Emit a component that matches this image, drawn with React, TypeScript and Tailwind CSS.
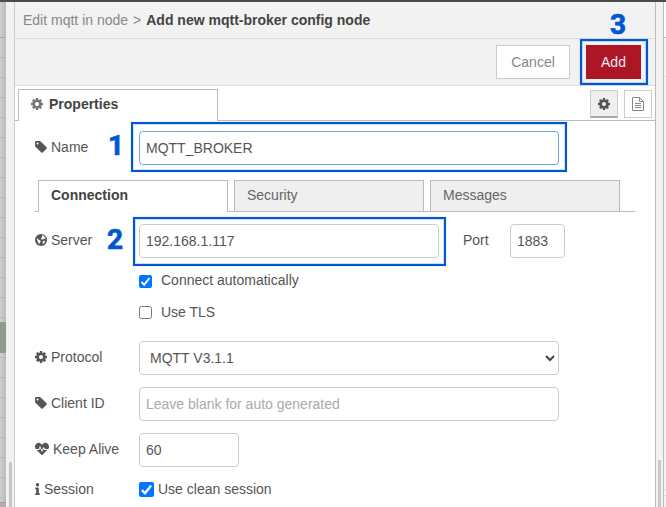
import React from 'react';
import { FaHeartbeat, FaInfo } from 'react-icons/fa';

function Gear({ className = '' }: { className?: string }) {
  return (
    <svg viewBox="0 128 1536 1536" className={'h-3 w-3 shrink-0 fill-current ' + className}>
      <path d="M1024 896q0-106-75-181t-181-75-181 75-75 181 75 181 181 75 181-75 75-181zm512-109v222q0 12-8 23t-20 13l-185 28q-19 54-39 91 35 50 107 138 10 12 10 25t-9 23q-27 37-99 108t-94 71q-12 0-26-9l-138-108q-44 23-91 38-16 136-29 186-7 28-36 28h-222q-14 0-24.500-8.500t-11.500-21.500l-28-184q-49-16-90-37l-141 107q-10 9-25 9-14 0-25-11-126-114-165-168-7-10-7-23 0-12 8-23 15-21 51-66.500t54-70.500q-27-50-41-99l-183-27q-13-2-21-12.500t-8-23.500v-222q0-12 8-23t19-13l186-28q14-46 39-92-40-57-107-138-10-12-10-24 0-10 9-23 26-36 98.500-107.500t94.500-71.500q13 0 26 10l138 107q44-23 91-38 16-136 29-186 7-28 36-28h222q14 0 24.500 8.500t11.500 21.500l28 184q49 16 90 37l142-107q9-9 24-9 13 0 25 10 129 119 165 170 7 8 7 22 0 12-8 23-15 21-51 66.500t-54 70.500q26 50 41 98l183 28q13 2 21 12.500t8 23.500z" />
    </svg>
  );
}

function Tag() {
  return (
    <svg viewBox="0 128 1536 1536" className="h-3 w-3 shrink-0 fill-current">
      <path d="M448 448q0-53-37.500-90.500t-90.500-37.500-90.500 37.500-37.500 90.500 37.500 90.500 90.500 37.500 90.500-37.500 37.500-90.500zm1067 576q0 53-37 90l-491 492q-39 37-91 37-53 0-90-37l-715-716q-38-37-64.500-101t-26.500-117v-416q0-52 38-90t90-38h416q53 0 117 26.500t102 64.500l715 714q37 39 37 91z" />
    </svg>
  );
}

function Globe() {
  return (
    <svg viewBox="0 0 12 12" className="h-3 w-3 shrink-0">
      <circle cx="6" cy="6" r="6" className="fill-current" />
      <path className="fill-white" d="M7.200 1.300l1.500.500 1.700 2.100-.100 1-1.200-.400-1 .900-1.400.200-.800-1 .900-1.200zM1.700 5.200l.800-.700 1.200 1.300 1.300.500.800 1-.900 1.100-.500 1.600-.700-.300-.600-1.700zM8 7l1.600-.200.500.900-1.300 1.900-.900.200-.300-1.300z" />
    </svg>
  );
}

function Doc() {
  return (
    <svg viewBox="0 0 12 14" className="h-3.5 w-3 fill-none stroke-current">
      <path d="M.5 1v12q0 .5.5.5h10q.5 0 .5-.5V4.500L7.500.5H1Q.5.5.5 1zM7.500.5v4h4M3 6.500h6M3 8.500h6M3 10.500h6" />
    </svg>
  );
}

function Check({ on, className = 'size-[13px]' }: { on?: boolean; className?: string }) {
  return on ? (
    <span className={'flex shrink-0 items-center justify-center rounded-[2px] bg-[#0075ff] ' + className}>
      <svg viewBox="0 0 13 13" className="size-full fill-none stroke-white stroke-2">
        <path d="M2.500 7l2.700 2.700L10.500 3" />
      </svg>
    </span>
  ) : (
    <span className={'shrink-0 rounded-[2.500px] border border-[#767676] bg-white ' + className} />
  );
}

function Row({ icon, label, className = 'h-[34px]', children }: { icon: React.ReactNode; label: string; className?: string; children: React.ReactNode }) {
  return (
    <div className={'flex shrink-0 items-center ' + className}>
      <div className="-mt-0.5 flex w-[104px] items-center gap-1">{icon}<span>{label}</span></div>
      {children}
    </div>
  );
}

const field = 'flex h-[34px] shrink-0 items-center rounded-[4px] border border-[#ccc] bg-white px-1.5';
const marker = "absolute font-['Roboto',sans-serif] text-[28px] leading-7 font-bold text-[#0057d0] [-webkit-text-stroke:0.7px_#0057d0]";
const frame = 'absolute border-2 border-[#0057d0] shadow-[inset_0_0_0_1px_#0057d033,0_0_1px_#0057d066]';

export default function App() {
  return (
    <div className="relative flex h-[507px] w-[666px] flex-col overflow-hidden bg-[#f2f2f2] font-['Liberation_Sans',Arial,sans-serif] text-[14px] leading-5 text-[#555]">
      <div className="h-0.5 shrink-0 bg-[#4b4b4b]" />
      <div className="flex min-h-0 flex-1">
        <div className="flex w-1.5 shrink-0 flex-col bg-linear-to-r from-[#d0d0d0] to-[#bababa]">
          <div className="h-9 shrink-0 border-b border-[#aaa]" />
          {[0, 1, 2, 3, 4, 5, 6, 7, 8, 9, 10, 11, 12, 13].map((n) =>
            <div key={n} className="h-5 shrink-0 border-b border-[#b9b9b9]" />)}
          <div className="mt-1 h-[31px] shrink-0 border-y border-[#999] bg-[#8d9d8b]" />
          {[0, 1, 2, 3, 4, 5, 6, 7].map((n) =>
            <div key={n} className={(n === 0 ? 'h-[5px]' : 'h-5') + ' shrink-0 border-b border-[#b9b9b9]'} />)}
          <div className="mt-auto h-[5px] shrink-0 border-t border-[#999] bg-[#b8a9b3]" />
        </div>
        <div className="flex w-2 shrink-0 items-end justify-end pr-0.5"><div className="h-[45px] w-[3px] rounded-t-[1px] bg-[#c6c6c6]" /></div>

        <div className="flex min-w-0 flex-1 flex-col border-x border-l-[#ccc] border-r-[#bbb] bg-white">
          <div className="flex h-[37px] shrink-0 items-center gap-[5px] border-b border-[#ddd] bg-[#f2f2f2] pl-2 text-[#888]">
            <span>Edit mqtt in node</span><span>&gt;</span><b className="text-[#444]">Add new mqtt-broker config node</b>
          </div>
          <div className="flex h-[47px] shrink-0 items-center justify-end gap-4 border-b border-[#ddd] bg-[#f2f2f2] pr-3.5">
            <button className="h-[34px] w-[74px] border border-[#ccc] bg-white text-[#888]">Cancel</button>
            <button className="h-[34px] w-[55px] bg-[#ad1625] text-[#eee]">Add</button>
          </div>
          <div className="flex h-[35px] shrink-0 pt-[3px]">
            <div className="w-[3px] border-b border-[#bbb]" />
            <div className="flex w-[200px] items-center gap-1.5 border border-b-0 border-[#bbb] pb-[3px] pl-3 font-bold text-[#444]">
              <Gear className="text-[#777]" />Properties
            </div>
            <div className="flex flex-1 items-start justify-end gap-1.5 border-b border-[#bbb] pt-px pr-[3px] text-[#555]">
              <div className="flex h-7 w-7 items-center justify-center border border-b-2 border-[#ccc] border-b-[#aaa] bg-[#efefef]"><Gear /></div>
              <div className="flex h-7 w-7 items-center justify-center border border-[#ccc] text-[#888]"><Doc /></div>
            </div>
          </div>

          <div className="flex flex-1 flex-col pt-[10px] pl-5">
            <Row icon={<Tag />} label="Name">
              <div className={field + ' w-[420px] border-[#72a7e8]!'}>MQTT_BROKER</div>
            </Row>
            <div className="mt-[15px] flex h-8 w-[600px] shrink-0">
              <div className="w-[3px] border-b border-[#bbb]" />
              <div className="flex w-[190px] items-center border border-b-0 border-[#bbb] pb-[3px] pl-3 font-bold text-[#444]">Connection</div>
              <div className="w-1.5 border-b border-[#bbb]" />
              <div className="flex w-[190px] items-center border border-[#bbb] bg-[#efefef] pb-0.5 pl-3 text-[#666]">Security</div>
              <div className="w-1.5 border-b border-[#bbb]" />
              <div className="flex w-[190px] items-center border border-[#bbb] bg-[#efefef] pb-0.5 pl-3 text-[#666]">Messages</div>
              <div className="flex-1 border-b border-[#bbb]" />
            </div>
            <Row icon={<Globe />} label="Server" className="mt-3 h-[34px]">
              <div className={field + ' w-[300px]'}>192.168.1.117</div>
              <span className="-mt-0.5 ml-6 w-[47px]">Port</span>
              <div className={field + ' w-[55px]'}>1883</div>
            </Row>
            <div className="mt-[12px] flex h-5 shrink-0 items-center gap-[9px] pl-[104px]"><Check on className="mt-[3px] size-[13px]" />Connect automatically</div>
            <div className="mt-3 flex h-5 shrink-0 items-center gap-[9px] pl-[104px]"><Check />Use TLS</div>
            <Row icon={<Gear />} label="Protocol" className="mt-[19px] h-[34px]">
              <div className={field + ' w-[420px] justify-between pr-[3px]! pl-[10px]!'}>
                MQTT V3.1.1
                <svg viewBox="0 0 10 7" className="h-[7px] w-[10px] fill-none stroke-[#444] stroke-2"><path d="M1 1l4 4 4-4" /></svg>
              </div>
            </Row>
            <Row icon={<Tag />} label="Client ID" className="mt-3 h-[34px]">
              <div className={field + ' w-[420px] text-[#aaa]'}>Leave blank for auto generated</div>
            </Row>
            <Row icon={<FaHeartbeat className="size-3.5" />} label="Keep Alive" className="mt-3 h-[34px]">
              <div className={field + ' w-[100px]'}>60</div>
            </Row>
            <Row icon={<FaInfo className="h-3 w-[5px]" />} label="Session" className="mt-[13px] h-5">
              <Check on className="-mt-px size-[15px]" /><span className="-mt-0.5 ml-1">Use clean session</span>
            </Row>
          </div>
        </div>

        <div className="flex w-[7px] shrink-0 items-end justify-center"><div className="h-[47px] w-[3px] bg-[#c8c8c8]" /></div>
        <div className="flex w-[3px] shrink-0 flex-col border-l border-[#bbb] bg-[#f5f5f5]">
          <div className="h-9 border-b border-[#bbb] bg-white" />
          <div className="h-[39px] border-b border-[#ddd]" />
          <div className="mt-auto mb-[11px] h-[7px] border-y border-[#ddd]" />
        </div>
      </div>

      <div className={frame + ' top-[39px] left-[580px] h-[46px] w-[68px]'} />
      <div className={frame + ' top-[122px] left-[131px] h-[50px] w-[436px]'} />
      <div className={frame + ' top-[217px] left-[133px] h-[49px] w-[313px]'} />
      <div className={marker + ' top-[132px] left-[108px]'}>1</div>
      <div className={marker + ' top-[226px] left-[107px]'}>2</div>
      <div className={marker + ' top-[11px] left-[610px]'}>3</div>
    </div>
  );
}
